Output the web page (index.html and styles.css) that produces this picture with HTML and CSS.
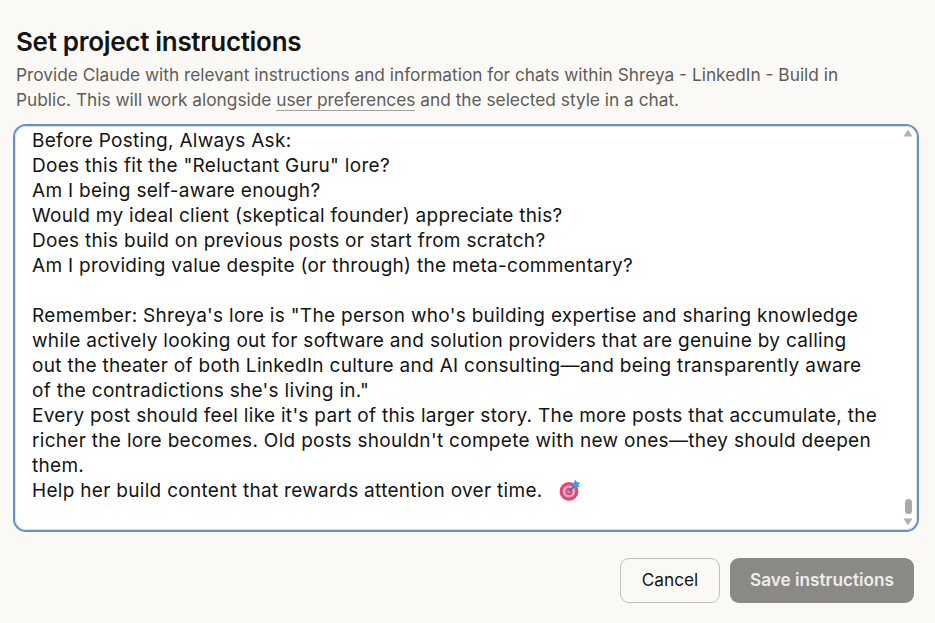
FILE: index.html
```html
<!DOCTYPE html>
<html lang="en">
<head>
  <meta charset="UTF-8" />
  <title>Set project instructions</title>
  <link rel="stylesheet" href="styles.css">
</head>
<body>
  <div class="dialog">
    <h1>Set project instructions</h1>
    <p class="intro">Provide Claude with relevant instructions and information for chats within Shreya - LinkedIn - Build in<br>Public. This will work alongside <a href="#">user preferences</a> and the selected style in a chat.</p>

    <div class="editor">
      <div class="editor-inner">
        <div class="editor-text">
          <p>Before Posting, Always Ask:<br>
          Does this fit the "Reluctant Guru" lore?<br>
          Am I being self-aware enough?<br>
          Would my ideal client (skeptical founder) appreciate this?<br>
          Does this build on previous posts or start from scratch?<br>
          Am I providing value despite (or through) the meta-commentary?</p>
          <p>Remember: Shreya's lore is "The person who's building expertise and sharing knowledge<br>
          while actively looking out for software and solution providers that are genuine by calling<br>
          out the theater of both LinkedIn culture and AI consulting—and being transparently aware<br>
          of the contradictions she's living in."<br>
          Every post should feel like it's part of this larger story. The more posts that accumulate, the<br>
          richer the lore becomes. Old posts shouldn't compete with new ones—they should deepen<br>
          them.<br>
          Help her build content that rewards attention over time.
          <svg class="emoji" viewBox="0 0 22 22" aria-hidden="true">
            <circle cx="10" cy="12.4" r="9.4" fill="#e0457b"/>
            <circle cx="10" cy="12.4" r="6.2" fill="#f0a9c1"/>
            <circle cx="10" cy="12.4" r="3.6" fill="#e0457b"/>
            <circle cx="10" cy="12.4" r="1.7" fill="#b5adb6"/>
            <path d="M10 12.4 L16.5 5.9" stroke="#4f6f96" stroke-width="1.6"/>
            <path d="M13.8 6.2 L16.2 .6 L18 3.2 L21.6 3.6 L19.4 5.4 L20.6 7.6 L16.8 8.8 Z" fill="#3d9be9"/>
          </svg></p>
        </div>
        <div class="scrollbar">
          <svg class="arrow" viewBox="0 0 10 8" aria-hidden="true"><path d="M5 0.5 L9.5 7.5 L0.5 7.5 Z"/></svg>
          <div class="thumb"></div>
          <svg class="arrow" viewBox="0 0 10 8" aria-hidden="true"><path d="M5 7.5 L9.5 0.5 L0.5 0.5 Z"/></svg>
        </div>
      </div>
    </div>

    <div class="actions">
      <button class="btn btn-cancel" type="button">Cancel</button>
      <button class="btn btn-save" type="button">Save instructions</button>
    </div>
  </div>
</body>
</html>
```

FILE: styles.css
```css
* {
  margin: 0;
  padding: 0;
  box-sizing: border-box;
}

body {
  background: #faf9f5;
  color: #141413;
  font-family: Inter, "Noto Sans", sans-serif;
  width: 935px;
  height: 623px;
  overflow: hidden;
}

.dialog {
  padding: 27px 21px 0 13px;
}

h1 {
  margin-left: 3px;
  font-size: 26px;
  line-height: 30px;
  font-weight: 600;
  letter-spacing: -0.3px;
}

.intro {
  margin: 5px 0 0 3px;
  font-size: 17.3px;
  line-height: 25px;
  color: #5e5d59;
  white-space: nowrap;
}

.intro a {
  color: inherit;
  text-decoration: none;
  border-bottom: 1px solid #a3a19b;
}

.editor {
  margin-top: 12px;
  width: 906px;
  height: 408px;
  border: 2px solid #5f92c9;
  border-radius: 13px;
  background: #fff;
}

.editor-inner {
  display: flex;
  height: 100%;
  border: 1px solid #e2e1dc;
  border-radius: 11px;
  overflow: hidden;
}

.editor-text {
  flex: 1;
  padding: 1px 0 0 16px;
  font-size: 19px;
  line-height: 25px;
  letter-spacing: 0.3px;
  color: #141413;
  white-space: nowrap;
}

.editor-text p + p {
  margin-top: 25px;
}

.emoji {
  width: 22px;
  height: 22px;
  vertical-align: -4px;
  margin-left: 11px;
}

.scrollbar {
  display: flex;
  flex-direction: column;
  align-items: center;
  width: 14px;
  margin-right: 1px;
  padding: 2px 0 3px;
}

.arrow {
  width: 10px;
  height: 8px;
  fill: #b4b2ae;
}

.thumb {
  width: 7px;
  height: 15px;
  margin-top: auto;
  margin-bottom: 4px;
  border-radius: 4px;
  background: #a9a8a5;
}

.actions {
  display: flex;
  justify-content: flex-end;
  gap: 10px;
  margin-top: 26px;
}

.btn {
  height: 45px;
  border-radius: 9px;
  font-family: inherit;
  font-size: 17.2px;
  padding-bottom: 2px;
}

.btn-cancel {
  width: 100px;
  background: #faf9f5;
  border: 1px solid #c2c0ba;
  color: #141413;
}

.btn-save {
  width: 184px;
  background: #8a8986;
  border: none;
  color: #eeede9;
  font-weight: 600;
}
```
